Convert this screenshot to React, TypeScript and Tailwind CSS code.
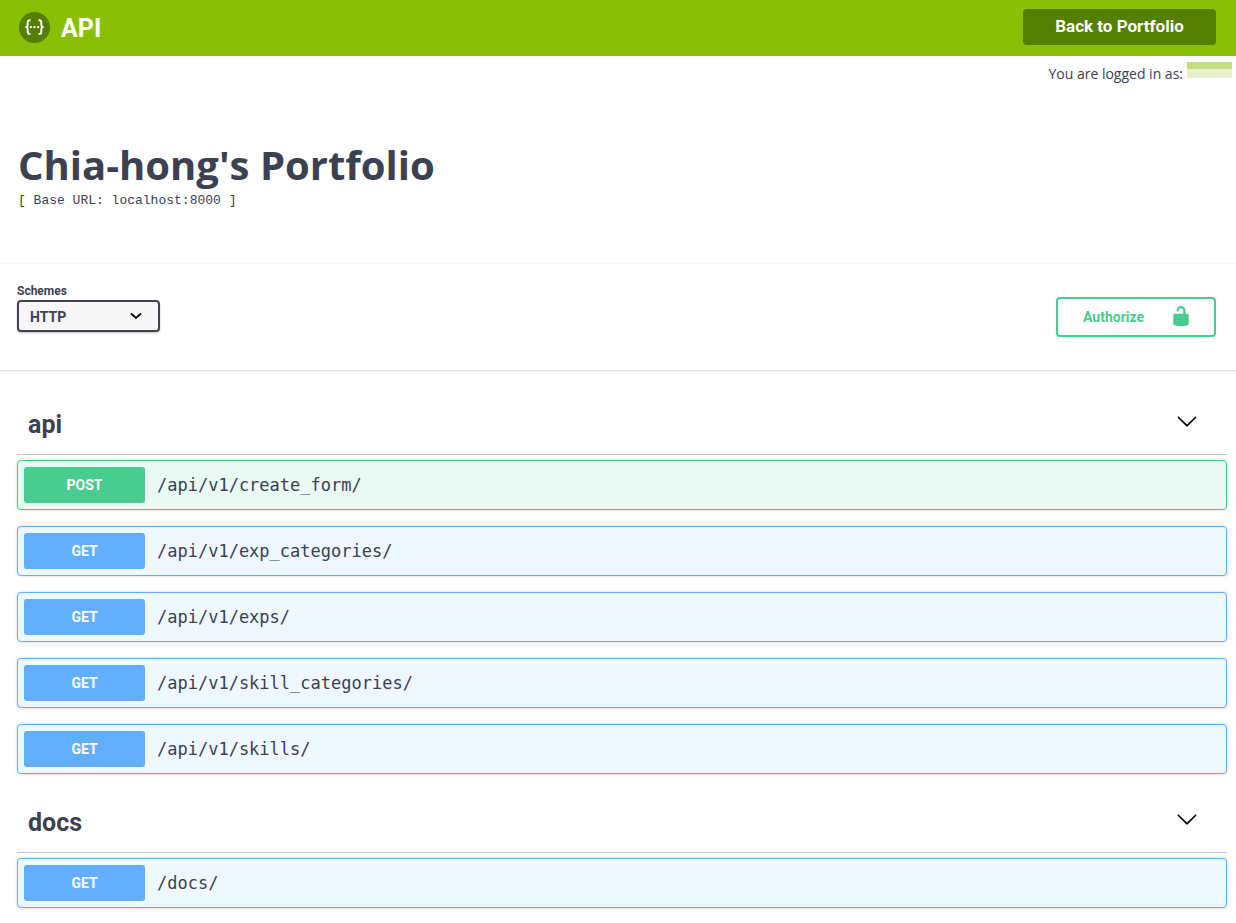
import { useState } from "react";

type Method = "GET" | "POST";
type Operation = { method: Method; path: string };

const sections: { tag: string; operations: Operation[] }[] = [
  {
    tag: "api",
    operations: [
      { method: "POST", path: "/api/v1/create_form/" },
      { method: "GET", path: "/api/v1/exp_categories/" },
      { method: "GET", path: "/api/v1/exps/" },
      { method: "GET", path: "/api/v1/skill_categories/" },
      { method: "GET", path: "/api/v1/skills/" },
    ],
  },
  { tag: "docs", operations: [{ method: "GET", path: "/docs/" }] },
];

const blockStyle: Record<Method, string> = {
  POST: "border-[#49cc90] bg-[#e9f9f3]",
  GET: "border-[#61affe] bg-[#eff7ff]",
};

const badgeStyle: Record<Method, string> = {
  POST: "bg-[#49cc90]",
  GET: "bg-[#61affe]",
};

function Logo() {
  return (
    <svg viewBox="0 0 32 32" className="size-8" aria-hidden="true">
      <circle cx="16.5" cy="16.5" r="15.5" fill="#547f00" />
      <g fill="none" stroke="#fff" strokeWidth="1.9">
        <path d="M12.5 9.3h-.9c-1.4 0-1.9.7-1.9 2v2.5c0 1.4-.6 2.3-2.3 2.3 1.7 0 2.3.9 2.3 2.3v2.5c0 1.3.5 2 1.9 2h.9" />
        <path d="M20.5 9.3h.9c1.4 0 1.9.7 1.9 2v2.5c0 1.4.6 2.3 2.3 2.3-1.7 0-2.3.9-2.3 2.3v2.5c0 1.3-.5 2-1.9 2h-.9" />
      </g>
      <g fill="#fff">
        <circle cx="12.8" cy="16.1" r="1.2" />
        <circle cx="16.5" cy="16.1" r="1.2" />
        <circle cx="20.2" cy="16.1" r="1.2" />
      </g>
    </svg>
  );
}

function Chevron({ className }: { className: string }) {
  return (
    <svg viewBox="0 0 20 20" className={className} aria-hidden="true">
      <path d="M17.418 6.109c.272-.268.709-.268.979 0s.271.701 0 .969l-7.908 7.83c-.27.268-.707.268-.979 0l-7.908-7.83c-.27-.268-.27-.701 0-.969.271-.268.709-.268.979 0L10 13.25l7.418-7.141z" />
    </svg>
  );
}

function OperationBlock({ method, path }: Operation) {
  return (
    <button
      type="button"
      className={`flex h-[50px] w-full items-center gap-3 rounded border px-1.5 text-left shadow-[0_0_3px_rgba(0,0,0,0.19)] ${blockStyle[method]}`}
    >
      <span
        className={`flex h-9 w-[121px] items-center justify-center rounded-[3px] text-sm font-bold text-white ${badgeStyle[method]}`}
      >
        {method}
      </span>
      <span className="pt-0.5 font-['DejaVu_Sans_Mono',monospace] text-[17px]">{path}</span>
    </button>
  );
}

function TagSection({ tag, operations }: { tag: string; operations: Operation[] }) {
  const [open, setOpen] = useState(true);
  return (
    <section>
      <h2 className="border-b border-[#3b4151]/30">
        <button
          type="button"
          aria-expanded={open}
          onClick={() => setOpen(!open)}
          className="flex h-[63px] w-full items-center justify-between pr-[29px] pb-1 pl-[11px] text-[25px] font-bold"
        >
          <span className="pt-2">{tag}</span>
          <Chevron className={open ? "size-[22px] fill-black" : "size-[22px] -rotate-90 fill-black"} />
        </button>
      </h2>
      {open && (
        <div className="flex flex-col gap-4 pt-[5px]">
          {operations.map((op) => (
            <OperationBlock key={op.path} {...op} />
          ))}
        </div>
      )}
    </section>
  );
}

export default function App() {
  return (
    <div className="min-h-screen bg-white pb-4 font-[Roboto,sans-serif] text-[#3b4151]">
      <header className="flex h-14 items-center justify-between bg-[#89bf04] pr-5 pb-0.5 pl-[18px] text-white">
        <a href="#top" className="flex items-center gap-[11px] text-[25px] font-bold">
          <Logo />
          <span className="pt-1">API</span>
        </a>
        <a
          href="#portfolio"
          className="flex h-9 w-[193px] items-center justify-center rounded bg-[#547f00] text-[17px] font-bold"
        >
          Back to Portfolio
        </a>
      </header>

      <div className="flex justify-end gap-1 pt-1.5 pr-1 font-['Open_Sans',sans-serif] text-sm leading-6">
        <span>You are logged in as:</span>
        <span className="h-4 w-[45px] border-t-[7px] border-[#c4df81] bg-[#e7f2cd]" />
      </div>

      <div className="border-b border-[#fafafa] px-[18px] pt-[52px] pb-[53px]">
        <h1 className="font-['Open_Sans',sans-serif] text-[40px] leading-[54px] font-bold">
          Chia-hong's Portfolio
        </h1>
        <p className="font-['Liberation_Mono',monospace] text-[13px] leading-[18px]">
          [ Base URL: localhost:8000 ]
        </p>
      </div>

      <div className="flex h-[107px] items-start justify-between border-b border-[#e2e2e2] pr-5 pl-[17px] shadow-[0_1px_2px_rgba(0,0,0,0.08)]">
        <div className="flex flex-col pt-[19px]">
          <label htmlFor="schemes" className="text-xs leading-[17px] font-bold">
            Schemes
          </label>
          <div className="relative">
            <select
              id="schemes"
              className="h-8 w-[143px] appearance-none rounded border-2 border-[#41444e] bg-[#f7f7f7] pt-0.5 pl-[11px] text-sm font-bold shadow-[0_1px_2px_rgba(0,0,0,0.25)]"
            >
              <option>HTTP</option>
            </select>
            <svg
              viewBox="0 0 12 8"
              className="pointer-events-none absolute top-3 right-[18px] h-2 w-3"
              aria-hidden="true"
            >
              <path d="M1 1.5 6 6l5-4.5" fill="none" stroke="#000" strokeWidth="1.7" />
            </svg>
          </div>
        </div>
        <button
          type="button"
          className="mt-[33px] flex h-10 w-40 items-center justify-between rounded border-2 border-[#49cc90] pr-[22px] pb-0.5 pl-[25px] text-sm font-bold text-[#49cc90] shadow-[0_1px_2px_rgba(0,0,0,0.1)]"
        >
          <span className="pt-0.5">Authorize</span>
          <svg viewBox="0 0 20 20" className="size-[22px] fill-[#49cc90]" aria-hidden="true">
            <path d="M15.8 8H14V5.6C14 2.703 12.665 1 10 1 7.334 1 6 2.703 6 5.6V6h2v-.801C8 3.754 8.797 3 10 3c1.203 0 2 .754 2 2.199V8H4c-.553 0-1 .646-1 1.199V17c0 .549.428 1.139.951 1.307l1.197.387C5.672 18.861 6.55 19 7.1 19h5.8c.549 0 1.428-.139 1.951-.307l1.196-.387c.524-.167.953-.757.953-1.306V9.199C17 8.646 16.352 8 15.8 8z" />
          </svg>
        </button>
      </div>

      <main className="flex flex-col gap-[15px] pt-5 pr-[9px] pl-[17px]">
        {sections.map((section) => (
          <TagSection key={section.tag} {...section} />
        ))}
      </main>
    </div>
  );
}
